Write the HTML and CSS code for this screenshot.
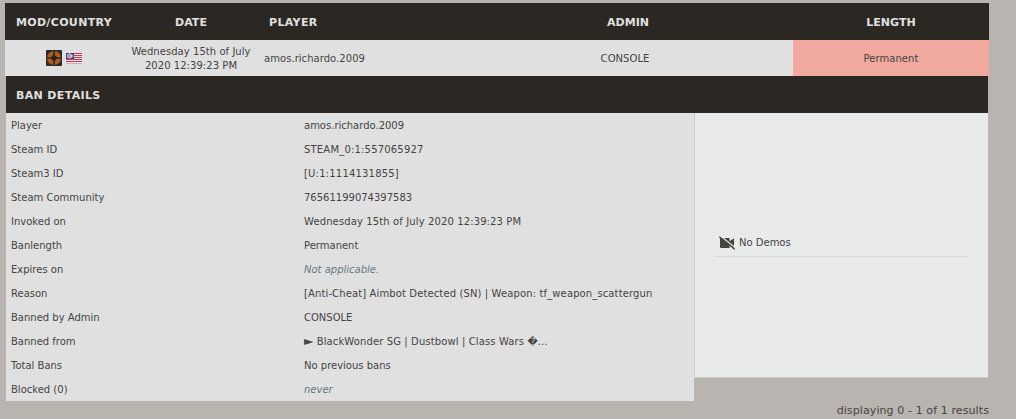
FILE: index.html
```html
<!DOCTYPE html>
<html lang="en">
<head>
    <meta charset="UTF-8">
    <title>Ban List</title>
    <link rel="stylesheet" href="styles.css">
</head>
<body>
    <div id="banlist">
        <table class="listtable">
            <colgroup>
                <col class="col-mod">
                <col class="col-date">
                <col class="col-player">
                <col class="col-admin">
                <col class="col-length">
            </colgroup>
            <tr class="listtable_top">
                <th class="wide">MOD/COUNTRY</th>
                <th>DATE</th>
                <th class="left wide">PLAYER</th>
                <th class="admin">ADMIN</th>
                <th>LENGTH</th>
            </tr>
            <tr class="listtable_row">
                <td class="icon_cell">
                    <div class="icons">
                        <svg width="16" height="16" viewBox="0 0 16 16">
                            <rect width="16" height="16" rx="1" fill="#2b2b2b"/>
                            <circle cx="8" cy="8" r="7" fill="#b05a20"/>
                            <path d="M8 0v16M0 8h16" stroke="#2b2b2b" stroke-width="1.6"/>
                            <circle cx="8" cy="8" r="2.7" fill="#262626"/>
                        </svg>
                        <svg width="16" height="11" viewBox="0 0 16 11">
                            <rect width="16" height="11" fill="#f4e4e8"/>
                            <path d="M0 .5h16M0 2.5h16M0 4.5h16M0 6.5h16M0 8.5h16" stroke="#b83a50"/>
                            <path d="M0 10.5h16" stroke="#e9a3ad"/>
                            <rect width="8" height="6" fill="#51439a"/>
                            <circle cx="3.6" cy="3" r="2" fill="#9a97a0" stroke="#e6e1b4"/>
                            <circle cx="5.8" cy="3" r="1" fill="#f4f0d0"/>
                        </svg>
                    </div>
                </td>
                <td class="date">Wednesday 15th of July 2020 12:39:23 PM</td>
                <td class="left">amos.richardo.2009</td>
                <td>CONSOLE</td>
                <td class="permanent">Permanent</td>
            </tr>
        </table>

        <div class="details">
            <h3 class="wide">BAN DETAILS</h3>
            <div class="details_body">
                <dl>
                    <dt>Player</dt><dd>amos.richardo.2009</dd>
                    <dt>Steam ID</dt><dd class="steam">STEAM_0:1:557065927</dd>
                    <dt>Steam3 ID</dt><dd class="steam">[U:1:1114131855]</dd>
                    <dt>Steam Community</dt><dd>76561199074397583</dd>
                    <dt>Invoked on</dt><dd class="long">Wednesday 15th of July 2020 12:39:23 PM</dd>
                    <dt>Banlength</dt><dd>Permanent</dd>
                    <dt>Expires on</dt><dd><i>Not applicable.</i></dd>
                    <dt>Reason</dt><dd class="long">[Anti-Cheat] Aimbot Detected (SN) | Weapon: tf_weapon_scattergun</dd>
                    <dt>Banned by Admin</dt><dd>CONSOLE</dd>
                    <dt>Banned from</dt><dd class="server"><span class="arrow">►</span> BlackWonder SG | Dustbowl | Class Wars �...</dd>
                    <dt>Total Bans</dt><dd>No previous bans</dd>
                    <dt>Blocked (0)</dt><dd><i>never</i></dd>
                </dl>
                <div class="ban-edit">
                    <div class="demo">
                        <svg width="16" height="14" viewBox="0 0 16 14">
                            <path d="M1 2h9.5v3.2L15 2.2v10L10.5 9v3H2.2L1 11.5z" fill="#47433d"/>
                            <path d="M1.4 0L16 11.6" stroke="#e9ebea" stroke-width="1.3"/>
                            <path d="M.3 .8L15.7 13.2" stroke="#47433d" stroke-width="1.3"/>
                        </svg>
                        <span>No Demos</span>
                    </div>
                </div>
            </div>
        </div>
        <div class="results">displaying 0 - 1 of 1 results</div>
    </div>
</body>
</html>
```

FILE: styles.css
```css
body {
    margin: 0;
    padding: 3px 0 0 5px;
    background-color: #bab4b1;
    color: #444;
    font-family: Verdana, "DejaVu Sans", sans-serif;
    font-size: 10px;
    line-height: 14px;
}
#banlist {
    width: 984px;
}
.listtable {
    width: 100%;
    table-layout: fixed;
    border-collapse: collapse;
}
.col-mod { width: 118px; }
.col-date { width: 136px; }
.col-player { width: 198px; }
.col-admin { width: 336px; }
.col-length { width: 196px; }
.listtable_top {
    height: 37px;
    background-color: #2b2723;
    color: #e0e0e0;
    font-size: 11px;
}
.listtable th,
.listtable td {
    padding: 2px 5px 0;
    text-align: center;
    letter-spacing: 0.05px;
}
.listtable .left {
    text-align: left;
}
.listtable th.left {
    padding-left: 10px;
}
.listtable th.admin {
    padding-left: 11px;
}
.listtable th.wide,
.details h3.wide {
    letter-spacing: 0.35px;
}
.listtable_row {
    height: 36px;
    background-color: #e0e0e0;
}
.listtable td.icon_cell {
    padding-top: 0;
}
.listtable_row .permanent {
    background-color: #f1a9a0;
}
.icons {
    display: flex;
    align-items: center;
    justify-content: center;
    gap: 4px;
}
.details {
    margin: 0 1px 0 1px;
}
.details h3 {
    margin: 0;
    padding: 2px 0 0 10px;
    background-color: #2b2723;
    color: #e0e0e0;
    font-size: 11px;
    line-height: 35px;
}
.details_body {
    display: flex;
    align-items: flex-start;
}
dl {
    display: grid;
    grid-template-columns: 293px 1fr;
    grid-auto-rows: 24px;
    width: 688px;
    margin: 0;
    background-color: #e0e0e0;
    line-height: 25px;
}
dt,
dd {
    margin: 0;
    padding-left: 5px;
    white-space: nowrap;
}
dd i {
    color: #667880;
}
dd.steam {
    letter-spacing: 0.19px;
}
dd.long {
    letter-spacing: 0.12px;
}
dd.server {
    letter-spacing: 0.12px;
}
.arrow {
    font-size: 12px;
    line-height: 1;
}
.ban-edit {
    box-sizing: border-box;
    width: 294px;
    height: 265px;
    padding: 116px 19px 0;
    border-left: 1px solid #ccc;
    border-bottom: 1px solid #ccc;
    background-color: #e9ebea;
}
.demo {
    display: flex;
    align-items: center;
    gap: 4px;
    height: 27px;
    padding-left: 5px;
    border-bottom: 1px solid #d8dada;
}
.results {
    margin-top: 3px;
    font-size: 11px;
    letter-spacing: 0.1px;
    text-align: right;
}
```
